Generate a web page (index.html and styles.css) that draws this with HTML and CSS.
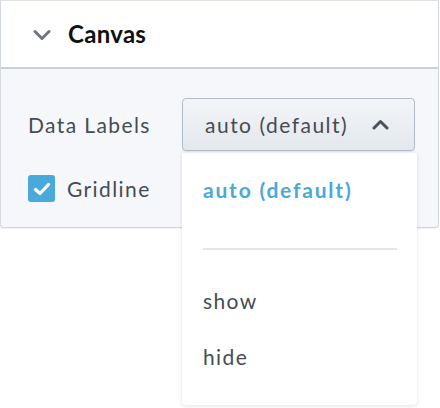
FILE: index.html
```html
<!DOCTYPE html>
<html>
<head>
<meta charset="utf-8">
<link rel="stylesheet" href="styles.css">
</head>
<body>
<div class="panel">
  <div class="header">
    <svg class="chev" width="18" height="12" viewBox="0 0 18 12"><path d="M2 2.5 L9 9.5 L16 2.5" fill="none" stroke="#6f757b" stroke-width="3" stroke-linecap="round" stroke-linejoin="round"/></svg>
    <span class="title">Canvas</span>
  </div>
  <div class="body">
    <div class="row">
      <span class="label label-col">Data Labels</span>
      <div class="select">
        <button class="btn">
          <span>auto (default)</span>
          <svg width="17" height="11" viewBox="0 0 17 11"><path d="M2 9 L8.5 2.5 L15 9" fill="none" stroke="#4a5158" stroke-width="3" stroke-linecap="round" stroke-linejoin="round"/></svg>
        </button>
        <div class="menu">
          <div class="item active">auto (default)</div>
          <div class="sep"></div>
          <div class="item">show</div>
          <div class="item">hide</div>
        </div>
      </div>
    </div>
    <div class="row check-row">
      <span class="box"><svg width="18" height="14" viewBox="0 0 18 14"><path d="M2.5 7.5 L7 11.5 L15.5 2.5" fill="none" stroke="#fff" stroke-width="3.2" stroke-linecap="round" stroke-linejoin="round"/></svg></span>
      <span class="label">Gridline</span>
    </div>
  </div>
</div>
</body>
</html>
```
FILE: styles.css
```css
* { box-sizing: border-box; }
html, body { min-height: 408px; }
body {
  margin: 0;
  background: #fff;
  font-family: Lato, "Noto Sans", sans-serif;
  color: #454c53;
}
.panel {
  width: 439px;
  border: 1px solid #d3d8de;
  border-top-color: #dde1e6;
  border-radius: 0 0 4px 4px;
  background: #f5f7fa;
  box-shadow: 0 1px 1px rgba(0,0,0,0.06);
}
.header {
  height: 68px;
  background: #fff;
  border-bottom: 2px solid #c9d0d8;
  display: flex;
  align-items: center;
  padding-left: 32px;
  padding-bottom: 2px;
}
.chev { margin-right: 17px; margin-top: 3px; }
.title {
  font-weight: 700;
  font-size: 24px;
  color: #111;
  letter-spacing: 0.3px;
}
.body {
  height: 158px;
  padding: 29px 0 0 27px;
}
.row {
  display: flex;
  align-items: center;
}
.label {
  font-size: 21px;
  color: #454c53;
  letter-spacing: 1.4px;
}
.label-col { width: 154px; }
.select {
  position: relative;
}
.btn {
  width: 233px;
  height: 53px;
  border: 1px solid #b3bdc7;
  border-radius: 4px;
  background: linear-gradient(#f3f5f8, #e3e8ed);
  box-shadow: 0 1px 1px rgba(0,0,0,0.08);
  display: flex;
  align-items: center;
  justify-content: space-between;
  padding: 0 25px 0 22px;
  font-family: inherit;
  font-size: 21px;
  letter-spacing: 1.5px;
  color: #454c53;
}
.menu {
  position: absolute;
  left: 0;
  top: 55px;
  width: 235px;
  height: 252px;
  background: #fff;
  border-radius: 0 0 4px 4px;
  box-shadow: 0 1px 4px rgba(0,0,0,0.12);
  padding: 22px 20px 0 21px;
  z-index: 2;
}
.item {
  font-size: 21px;
  letter-spacing: 1.4px;
  color: #454c53;
  height: 30px;
  line-height: 30px;
}
.item.active {
  color: #4aa9d9;
  font-weight: 700;
  letter-spacing: 1.8px;
}
.sep {
  height: 2px;
  background: #e4e6e8;
  margin: 43px 0 36px 0;
}
.item + .item { margin-top: 26px; }
.check-row { margin-top: 24px; }
.box {
  width: 27px;
  height: 27px;
  border-radius: 3px;
  background: #4aa9db;
  display: flex;
  align-items: center;
  justify-content: center;
  margin-right: 12px;
}
```
